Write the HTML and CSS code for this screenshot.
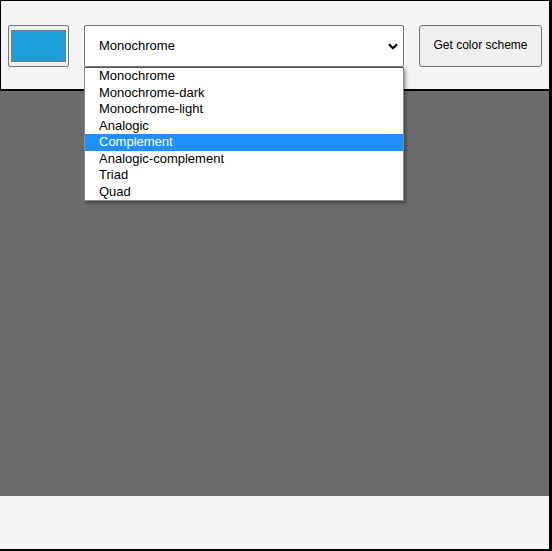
FILE: index.html
```html
<!DOCTYPE html>
<html>
<head>
<meta charset="utf-8">
<link rel="stylesheet" href="styles.css">
</head>
<body>
<div class="app">
  <header class="bar">
    <div class="swatch"><div class="swatch-fill"></div></div>
    <div class="select">
      <span class="select-value">Monochrome</span>
      <svg class="chevron" width="10" height="7" viewBox="0 0 10 7"><path d="M1 1.2 L5 5.2 L9 1.2" fill="none" stroke="#000" stroke-width="2.2"/></svg>
      <ul class="menu">
        <li>Monochrome</li>
        <li>Monochrome-dark</li>
        <li>Monochrome-light</li>
        <li>Analogic</li>
        <li class="active">Complement</li>
        <li>Analogic-complement</li>
        <li>Triad</li>
        <li>Quad</li>
      </ul>
    </div>
    <button class="btn">Get color scheme</button>
  </header>
  <main class="colors"></main>
  <footer class="foot"></footer>
</div>
</body>
</html>
```
FILE: styles.css
```css
html, body {
  margin: 0;
  padding: 0;
}
body {
  background: #000;
  width: 552px;
  height: 551px;
  overflow: hidden;
  font-family: "Liberation Sans", Arial, sans-serif;
}
.app {
  width: 549px;
  height: 549px;
  background: #f4f4f4;
  display: flex;
  flex-direction: column;
}
.bar {
  box-sizing: border-box;
  height: 91px;
  border-top: 1px solid #000;
  border-left: 1px solid #000;
  border-bottom: 2px solid #000;
  background: #f4f4f4;
  display: flex;
  align-items: flex-start;
  padding: 24px 0 0 7px;
  gap: 15px;
  position: relative;
  z-index: 2;
}
.swatch {
  box-sizing: border-box;
  width: 61px;
  height: 42px;
  border: 1px solid #767676;
  border-radius: 2px;
  background: #efefef;
  padding: 4px 2px;
}
.swatch-fill {
  box-sizing: border-box;
  width: 100%;
  height: 100%;
  background: #1f9fda;
  border: 1px solid #777;
}
.select {
  box-sizing: border-box;
  width: 320px;
  height: 42px;
  border: 1px solid #767676;
  border-radius: 2px;
  background: #fff;
  display: flex;
  align-items: center;
  justify-content: space-between;
  padding: 0 5px 0 14px;
  position: relative;
  font-size: 13px;
  color: #000;
}
.select-value {
  padding-bottom: 2px;
}
.chevron {
  display: block;
}
.menu {
  position: absolute;
  left: -1px;
  top: 41px;
  width: 320px;
  box-sizing: border-box;
  margin: 0;
  padding: 0;
  list-style: none;
  background: #fff;
  border: 1px solid #8a8a8a;
  border-top-color: #555;
  box-shadow: 2px 2px 3px rgba(0,0,0,0.35);
}
.menu li {
  height: 16.5px;
  line-height: 16.5px;
  padding-left: 14px;
  font-size: 13px;
  color: #000;
  white-space: nowrap;
}
.menu li.active {
  background: #1e90ff;
  color: #fff;
}
.btn {
  box-sizing: border-box;
  width: 123px;
  height: 42px;
  margin: 0;
  border: 1px solid #767676;
  border-radius: 3px;
  background: #efefef;
  font-family: "Liberation Sans", Arial, sans-serif;
  font-size: 12px;
  color: #000;
  padding: 0 0 2px;
}
.colors {
  height: 405px;
  background: #6b6b6b;
}
.foot {
  flex: 1;
  background: #f4f4f4;
}
```
